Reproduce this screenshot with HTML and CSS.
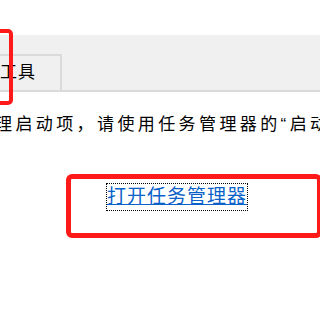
FILE: index.html
```html
<!DOCTYPE html>
<html lang="zh-CN">
<head>
<meta charset="utf-8">
<link rel="stylesheet" href="styles.css">
</head>
<body>
<div class="page">
  <div class="tabstrip">
    <div class="tab">工具</div>
  </div>
  <div class="mark-tab"></div>
  <p class="hint">理启动项，请使用任务管理器的“启动</p>
  <div class="mark-link">
    <a class="link" href="#">打开任务管理器</a>
  </div>
</div>
</body>
</html>
```
FILE: styles.css
```css
html, body {
  margin: 0;
  padding: 0;
  background: #ffffff;
}
.page {
  position: relative;
  width: 320px;
  height: 320px;
  overflow: hidden;
  font-family: "Liberation Sans", "Noto Sans CJK SC", sans-serif;
  color: #000000;
}
.tabstrip {
  margin-top: 35px;
  height: 55px;
  background: #f0f0f0;
  border-bottom: 2px solid #dadada;
  display: flex;
  align-items: flex-end;
}
.tab {
  box-sizing: border-box;
  width: 62px;
  height: 36px;
  border-top: 2px solid #dadada;
  border-right: 2px solid #dadada;
  display: flex;
  align-items: center;
  padding-left: 0;
  padding-bottom: 1px;
  font-size: 17px;
  letter-spacing: 1px;
  line-height: 20px;
}
.mark-tab {
  position: absolute;
  left: -20px;
  top: 29px;
  width: 33px;
  height: 76px;
  box-sizing: border-box;
  border: 4px solid #ff1a1a;
  border-radius: 5px;
}
.hint {
  margin: 23px 0 0 -5px;
  white-space: nowrap;
  font-size: 17px;
  letter-spacing: 3.4px;
  line-height: 20px;
}
.mark-link {
  box-sizing: border-box;
  margin: 39px 0 0 66px;
  width: 256px;
  height: 64px;
  border: 5px solid #ff1a1a;
  border-radius: 6px;
  padding: 5px 0 0 36px;
}
.link {
  display: inline-block;
  font-size: 19px;
  letter-spacing: 1px;
  line-height: 26px;
  color: #0a62c9;
  text-decoration: underline;
  outline: 1px dotted #000000;
  outline-offset: 0;
}
```
